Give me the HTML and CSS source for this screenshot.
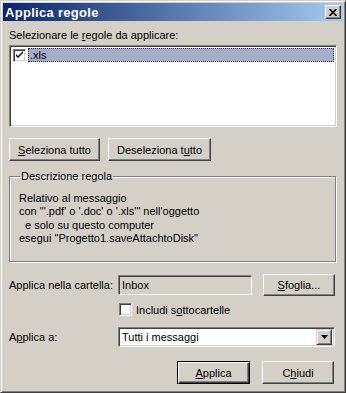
FILE: index.html
```html
<!DOCTYPE html>
<html lang="it">
<head>
    <meta charset="UTF-8">
    <title>Applica regole</title>
    <link rel="stylesheet" href="styles.css">
</head>
<body>
    <div class="window">
        <div class="titlebar">
            <span class="title">Applica regole</span>
            <span class="close">
                <svg width="8" height="7" viewBox="0 0 8 7"><path d="M0.6 0 L7.6 7 M7.4 0 L0.4 7" stroke="#000" stroke-width="1.7" fill="none"/></svg>
            </span>
        </div>

        <div class="content">
            <div class="label">Selezionare le <u>r</u>egole da applicare:</div>
            <div class="listbox">
                <div class="list-item">
                    <span class="check checked">
                        <svg width="9" height="9" viewBox="0 0 9 9"><path d="M1 3 L1 5 L3 7 L3 5 Z M3 5 L3 7 L8 2 L8 0 Z" fill="#000"/></svg>
                    </span>
                    <span class="item-text">.xls</span>
                </div>
            </div>

            <div class="btn-row">
                <button class="btn btn-select"><u>S</u>eleziona tutto</button>
                <button class="btn btn-deselect">Deseleziona t<u>u</u>tto</button>
            </div>

            <fieldset class="group">
                <legend>Descrizione regola</legend>
                <div class="desc">
                    <div>Relativo al messaggio</div>
                    <div>con "'.pdf' o '.doc' o '.xls'" nell'oggetto</div>
                    <div class="indent">e solo su questo computer</div>
                    <div>esegui "Progetto1.saveAttachtoDisk"</div>
                </div>
            </fieldset>

            <div class="form-row folder-row">
                <span class="row-label">Applica nella cartella:</span>
                <span class="field readonly">Inbox</span>
                <button class="btn btn-browse"><u>S</u>foglia...</button>
            </div>

            <div class="form-row sub-row">
                <span class="check"></span>
                <span>Includi s<u>o</u>ttocartelle</span>
            </div>

            <div class="form-row apply-row">
                <span class="row-label">A<u>p</u>plica a:</span>
                <span class="field combo">
                    <span class="combo-text">Tutti i messaggi</span>
                    <span class="combo-arrow">
                        <svg width="7" height="4" viewBox="0 0 7 4"><path d="M0 0 H7 L3.5 4 Z" fill="#000"/></svg>
                    </span>
                </span>
            </div>

            <div class="footer">
                <button class="btn btn-default"><u>A</u>pplica</button>
                <button class="btn btn-close">C<u>h</u>iudi</button>
            </div>
        </div>
    </div>
</body>
</html>
```

FILE: styles.css
```css
:root {
    --face: #d4d0c8;
    --shadow: #808080;
    --dark: #404040;
    --light: #ffffff;
}

* {
    margin: 0;
    padding: 0;
    box-sizing: border-box;
    font-family: 'Liberation Sans', Arial, sans-serif;
}

body {
    background-color: var(--face);
    width: 346px;
    height: 393px;
    font-size: 11px;
    color: #000;
}

.window {
    width: 346px;
    height: 393px;
    padding: 2px;
    background-color: var(--face);
    border: 1px solid;
    border-color: var(--face) var(--dark) var(--dark) var(--face);
    box-shadow: inset 1px 1px var(--light), inset -1px -1px var(--shadow);
}

.titlebar {
    height: 18px;
    display: flex;
    align-items: center;
    justify-content: space-between;
    padding: 0 2px 0 2px;
    background: linear-gradient(to right, #0a246a, #a6caf0);
}

.title {
    color: #fff;
    font-weight: bold;
    font-size: 13px;
    letter-spacing: 0.3px;
    line-height: 15px;
}

.close {
    width: 16px;
    height: 14px;
    display: flex;
    align-items: center;
    justify-content: center;
    background-color: var(--face);
    border: 1px solid;
    border-color: var(--light) var(--dark) var(--dark) var(--light);
    box-shadow: inset -1px -1px var(--shadow);
}

.content {
    padding: 8px 6px 0 6px;
}

.label {
    line-height: 13px;
}

.listbox {
    margin-top: 3px;
    height: 82px;
    background: #fff;
    border: 1px solid;
    border-color: var(--shadow) var(--light) var(--light) var(--shadow);
    box-shadow: inset 1px 1px var(--dark), inset -1px -1px var(--face);
    padding: 2px 2px 0 2px;
}

.list-item {
    display: flex;
    align-items: center;
    height: 14px;
}

.check {
    width: 13px;
    height: 13px;
    flex: none;
    display: flex;
    align-items: center;
    justify-content: center;
    background: #fff;
    border: 1px solid;
    border-color: var(--shadow) var(--light) var(--light) var(--shadow);
    box-shadow: inset 1px 1px var(--dark), inset -1px -1px var(--face);
}

.list-item .check {
    margin-left: 1px;
    margin-right: 2px;
}

.item-text {
    flex: 1;
    height: 14px;
    line-height: 12px;
    padding-left: 1px;
    background-color: #a6adcb;
    border: 1px dotted #333;
}

.btn {
    background-color: var(--face);
    font-size: 11px;
    color: #000;
    border: 1px solid;
    border-color: var(--light) var(--dark) var(--dark) var(--light);
    box-shadow: inset -1px -1px var(--shadow);
    height: 23px;
    text-align: center;
}

.btn-row {
    display: flex;
    gap: 8px;
    margin-top: 11px;
}

.btn-select {
    width: 91px;
}

.btn-deselect {
    width: 103px;
}

.group {
    margin-top: 9px;
    height: 92px;
    border: 1px solid var(--shadow);
    box-shadow: 1px 1px var(--light), inset 1px 1px var(--light);
    width: 327px;
    padding: 0 9px;
}

.group legend {
    margin-left: 1px;
    padding: 0 1px;
    line-height: 13px;
}

.desc {
    margin-top: 9px;
    line-height: 13.4px;
}

.indent {
    padding-left: 6px;
}

.form-row {
    display: flex;
    align-items: center;
}

.row-label {
    width: 109px;
    flex: none;
}

.field {
    height: 20px;
    border: 1px solid;
    border-color: var(--shadow) var(--light) var(--light) var(--shadow);
    box-shadow: inset 1px 1px var(--dark), inset -1px -1px var(--face);
    display: flex;
    align-items: center;
    padding-left: 3px;
}

.folder-row {
    margin-top: 11px;
}

.readonly {
    width: 134px;
}

.btn-browse {
    width: 72px;
    height: 22px;
    margin-left: 11px;
    margin-top: 1px;
}

.sub-row {
    margin-top: 7px;
    padding-left: 110px;
    gap: 4px;
}

.apply-row {
    margin-top: 11px;
}

.combo {
    width: 217px;
    height: 20px;
    background: #fff;
    padding-right: 2px;
}

.combo-text {
    flex: 1;
}

.combo-arrow {
    width: 16px;
    height: 16px;
    display: flex;
    align-items: center;
    justify-content: center;
    background-color: var(--face);
    border: 1px solid;
    border-color: var(--face) var(--dark) var(--dark) var(--face);
    box-shadow: inset 1px 1px var(--light), inset -1px -1px var(--shadow);
}

.footer {
    display: flex;
    justify-content: flex-end;
    gap: 12px;
    margin-top: 14px;
    padding-right: 3px;
}

.btn-default {
    width: 73px;
    border: 1px solid #000;
    box-shadow: inset 1px 1px var(--light), inset -1px -1px var(--dark), inset -2px -2px var(--shadow);
}

.btn-close {
    width: 72px;
}
```
